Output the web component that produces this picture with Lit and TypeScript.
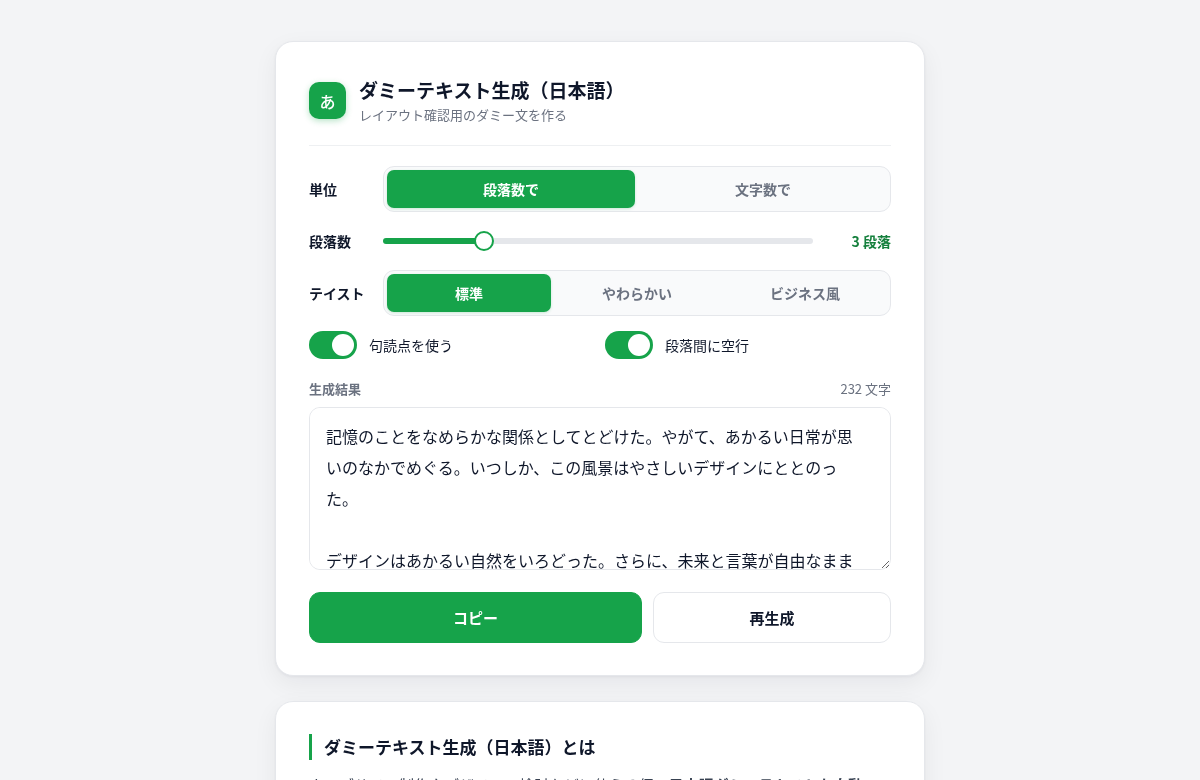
import { LitElement, html, css } from "lit";
import { customElement, state } from "lit/decorators.js";
import { classMap } from "lit/directives/class-map.js";
import { styleMap } from "lit/directives/style-map.js";

const SAMPLE = `記憶のことをなめらかな関係としてとどけた。やがて、あかるい日常が思いのなかでめぐる。いつしか、この風景はやさしいデザインにととのった。

デザインはあかるい自然をいろどった。さらに、未来と言葉が自由なままにつながる。`;

const UNITS = ["段落数で", "文字数で"];
const TASTES = ["標準", "やわらかい", "ビジネス風"];

@customElement("app-root")
export class AppRoot extends LitElement {
  @state() private unit = 0;
  @state() private taste = 0;
  @state() private count = 3;

  static styles = css`
    :host {
      display: block;
      box-sizing: border-box;
      min-height: 100vh;
      padding: 41px 16px;
      background: #f3f4f6;
      color: #0f172a;
      font-family: "Noto Sans CJK JP", sans-serif;
      font-size: 15px;
      line-height: 24px;
    }
    *, *::before { box-sizing: border-box; }
    button, input, textarea { font: inherit; color: inherit; margin: 0; }
    .page {
      max-width: 650px;
      margin: 0 auto;
      display: grid;
      gap: 25px;
    }
    .card {
      min-width: 0;
      padding: 32px 33px;
      background: #fff;
      border: 1px solid #e5e7eb;
      border-radius: 18px;
      box-shadow: 0 1px 3px rgba(17, 24, 39, 0.05), 0 8px 24px rgba(17, 24, 39, 0.06);
    }
    .head {
      display: flex;
      align-items: center;
      gap: 13px;
      padding-bottom: 21px;
      margin-bottom: 20px;
      border-bottom: 1px solid #eef0f2;
    }
    .logo {
      display: grid;
      place-items: center;
      width: 37px;
      height: 37px;
      margin-top: 3px;
      border-radius: 10px;
      background: #16a34a;
      color: #fff;
      font-size: 16px;
      line-height: 22px;
      font-weight: 500;
      box-shadow: 0 2px 6px rgba(22, 163, 74, 0.3);
    }
    .title { margin: 0; font-size: 19px; line-height: 32px; font-weight: 700; }
    .sub { margin: 0; font-size: 13px; line-height: 18px; color: #6b7280; }
    .form { display: grid; gap: 15px; }
    .row {
      display: grid;
      grid-template-columns: 60px minmax(0, 1fr);
      gap: 14px;
      align-items: center;
    }
    .name { font-size: 14px; font-weight: 700; white-space: nowrap; }
    .seg {
      display: grid;
      grid-auto-flow: column;
      grid-auto-columns: minmax(0, 1fr);
      gap: 4px;
      padding: 3px;
      border: 1px solid #e5e7eb;
      border-radius: 11px;
      background: #f9fafb;
    }
    .opt {
      height: 38px;
      padding: 0;
      border: 0;
      border-radius: 7px;
      background: none;
      color: #6b7280;
      font-size: 14px;
      font-weight: 700;
      cursor: pointer;
    }
    .opt.on {
      background: #16a34a;
      color: #fff;
      box-shadow: 0 1px 3px rgba(22, 163, 74, 0.2);
    }
    .slide { display: flex; align-items: center; gap: 14px; height: 28px; }
    .range {
      --fill: 0%;
      appearance: none;
      flex: 1;
      min-width: 0;
      height: 20px;
      background: none;
      cursor: pointer;
    }
    .range::-webkit-slider-runnable-track {
      height: 6px;
      border-radius: 3px;
      background: linear-gradient(90deg, #16a34a var(--fill), #e5e7eb var(--fill));
    }
    .range::-webkit-slider-thumb {
      appearance: none;
      width: 20px;
      height: 20px;
      margin-top: -7px;
      border: 2px solid #16a34a;
      border-radius: 50%;
      background: #fff;
    }
    .value {
      min-width: 64px;
      text-align: right;
      color: #15803d;
      font-size: 14px;
      font-weight: 700;
    }
    .switches { display: grid; grid-template-columns: 1fr 1fr; gap: 10px; }
    .switch { display: flex; align-items: center; gap: 12px; font-size: 14px; cursor: pointer; }
    .toggle {
      appearance: none;
      display: flex;
      flex: none;
      align-items: center;
      width: 48px;
      height: 28px;
      padding: 3px;
      border-radius: 14px;
      background: #d1d5db;
      cursor: pointer;
    }
    .toggle::before {
      content: "";
      width: 22px;
      height: 22px;
      border-radius: 50%;
      background: #fff;
    }
    .toggle:checked { justify-content: flex-end; background: #16a34a; }
    .meta {
      display: flex;
      justify-content: space-between;
      margin: 18px 0 6px;
      color: #6b7280;
      font-size: 13px;
    }
    .strong { font-weight: 700; }
    .out {
      display: block;
      width: 100%;
      height: 163px;
      padding: 13px 32px 13px 16px;
      border: 1px solid #e5e7eb;
      border-radius: 11px;
      background: #fff;
      font-size: 16px;
      line-height: 31px;
      resize: vertical;
      scrollbar-width: none;
    }
    .actions { display: grid; grid-template-columns: 7fr 5fr; gap: 11px; margin-top: 22px; }
    .btn {
      height: 51px;
      border: 1px solid #e5e7eb;
      border-radius: 11px;
      background: #fff;
      font-size: 15px;
      font-weight: 700;
      cursor: pointer;
    }
    .btn.primary { border-color: #16a34a; background: #16a34a; color: #fff; }
    .h2 {
      margin: 0 0 12px;
      padding-left: 12px;
      border-left: 3px solid #16a34a;
      font-size: 17px;
      line-height: 26px;
      font-weight: 700;
    }
    .text { margin: 0; font-size: 15px; line-height: 26px; color: #374151; }
  `;

  private segment(name: string, items: string[], active: number, pick: (i: number) => void) {
    return html`
      <div class="row">
        <span class="name" id=${name}>${name}</span>
        <div class="seg" role="group" aria-labelledby=${name}>
          ${items.map(
            (t, i) => html`<button
              type="button"
              class=${classMap({ opt: true, on: i === active })}
              aria-pressed=${i === active}
              @click=${() => pick(i)}
            >${t}</button>`
          )}
        </div>
      </div>
    `;
  }

  render() {
    const ratio = (this.count - 1) / 9;
    const fill = { "--fill": `calc(10px + (100% - 20px) * ${ratio})` };
    return html`
      <main class="page">
        <section class="card">
          <header class="head">
            <span class="logo" aria-hidden="true">あ</span>
            <div>
              <h1 class="title">ダミーテキスト生成（日本語）</h1>
              <p class="sub">レイアウト確認用のダミー文を作る</p>
            </div>
          </header>
          <div class="form">
            ${this.segment("単位", UNITS, this.unit, (i) => (this.unit = i))}
            <div class="row">
              <label class="name" for="count">段落数</label>
              <div class="slide">
                <input
                  class="range" id="count" type="range" min="1" max="10"
                  style=${styleMap(fill)}
                  .value=${String(this.count)}
                  @input=${(e: Event) => (this.count = Number((e.target as HTMLInputElement).value))}
                />
                <output class="value" for="count">${this.count} 段落</output>
              </div>
            </div>
            ${this.segment("テイスト", TASTES, this.taste, (i) => (this.taste = i))}
            <div class="switches">
              <label class="switch"><input class="toggle" type="checkbox" role="switch" checked />句読点を使う</label>
              <label class="switch"><input class="toggle" type="checkbox" role="switch" checked />段落間に空行</label>
            </div>
          </div>
          <div class="meta">
            <label class="strong" for="out">生成結果</label>
            <span>232 文字</span>
          </div>
          <textarea class="out" id="out" readonly .value=${SAMPLE}></textarea>
          <div class="actions">
            <button type="button" class="btn primary">コピー</button>
            <button type="button" class="btn">再生成</button>
          </div>
        </section>
        <section class="card">
          <h2 class="h2">ダミーテキスト生成（日本語）とは</h2>
          <p class="text">
            ウェブサイト制作やデザインの検討などに使える仮の<strong>日本語ダミーテキストを自動</strong>で生成するツールです。
          </p>
        </section>
      </main>
    `;
  }
}
